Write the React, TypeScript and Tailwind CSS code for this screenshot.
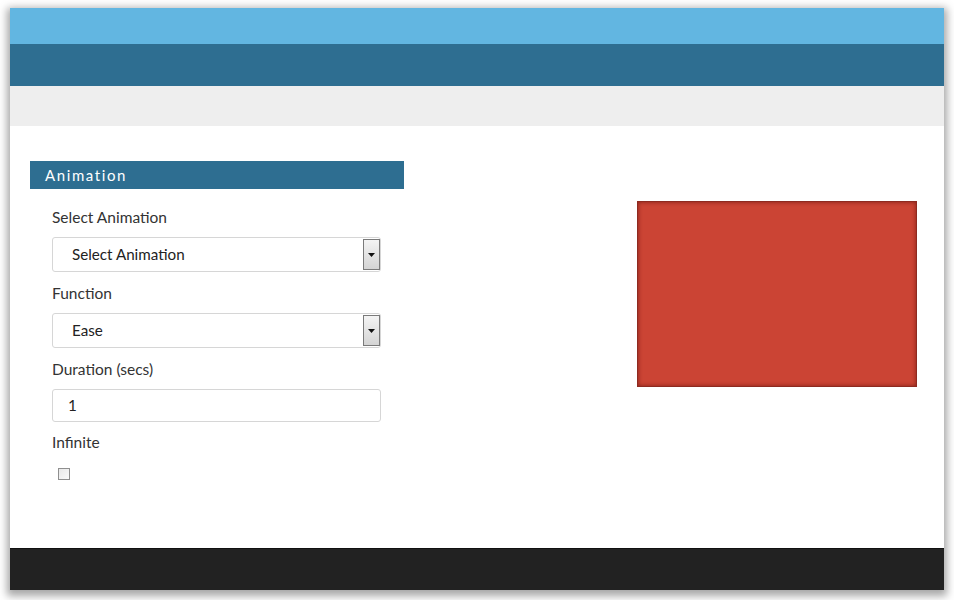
import React from "react";

function SelectBox({ value }: { value: string }) {
  return (
    <div className="flex h-[35px] w-[329px] items-stretch rounded-[3px] border border-[#d6d6d6] bg-white">
      <div className="flex flex-1 items-center pl-[19px] text-[15.2px] text-[#222]">{value}</div>
      <div className="my-[1px] mr-[0px] flex w-[17px] items-center justify-center border border-[#7a7a7a] bg-gradient-to-b from-[#f4f4f4] to-[#d4d4d4]">
        <svg width="7" height="4" viewBox="0 0 7 4">
          <path d="M0 0 H7 L3.5 4 Z" fill="#111" />
        </svg>
      </div>
    </div>
  );
}

export default function App() {
  return (
    <div className="h-[600px] w-[954px] bg-white" style={{ fontFamily: "Lato, 'Open Sans', sans-serif" }}>
      <div className="ml-[10px] pt-[8px]">
        <div className="flex h-[582px] w-[934px] flex-col shadow-[0_3px_8px_3px_rgba(0,0,0,0.35)]">
          <div className="h-[36px] bg-[#62b6e1]" />
          <div className="h-[42px] bg-[#2e6e91]" />
          <div className="h-[40px] bg-[#eeeeee]" />
          <div className="flex h-[422px] bg-white">
            <div className="ml-[20px] mt-[35px] w-[374px]">
              <div className="flex h-[28px] items-center bg-[#2e6e91] pl-[15px] text-[15px] tracking-[1.6px] text-white">
                Animation
              </div>
              <div className="pl-[22px]">
                <div className="mt-[18px] h-[20px] text-[15.5px] leading-[20px] text-[#333]">Select Animation</div>
                <div className="mt-[10px]">
                  <SelectBox value="Select Animation" />
                </div>
                <div className="mt-[11px] h-[20px] text-[15.5px] leading-[20px] text-[#333]">Function</div>
                <div className="mt-[10px]">
                  <SelectBox value="Ease" />
                </div>
                <div className="mt-[11px] h-[20px] text-[15.5px] leading-[20px] text-[#333]">Duration (secs)</div>
                <div className="mt-[10px] flex h-[33px] w-[329px] items-center rounded-[3px] border border-[#d6d6d6] bg-white pl-[15px] text-[15.2px] text-[#222]">
                  1
                </div>
                <div className="mt-[10px] h-[20px] text-[15.5px] leading-[20px] text-[#333]">Infinite</div>
                <div className="ml-[6px] mt-[16px] h-[12px] w-[12px] border border-[#8f8f8f] bg-gradient-to-br from-[#e8e8e8] to-[#fafafa]" />
              </div>
            </div>
            <div className="ml-auto mr-[27px] mt-[75px] h-[186px] w-[280px] border border-[#8e2a20] bg-[#cb4434] shadow-[inset_0_0_4px_rgba(80,10,5,0.6)]" />
          </div>
          <div className="h-[42px] border-t border-[#111] bg-[#222222]" />
        </div>
      </div>
    </div>
  );
}
